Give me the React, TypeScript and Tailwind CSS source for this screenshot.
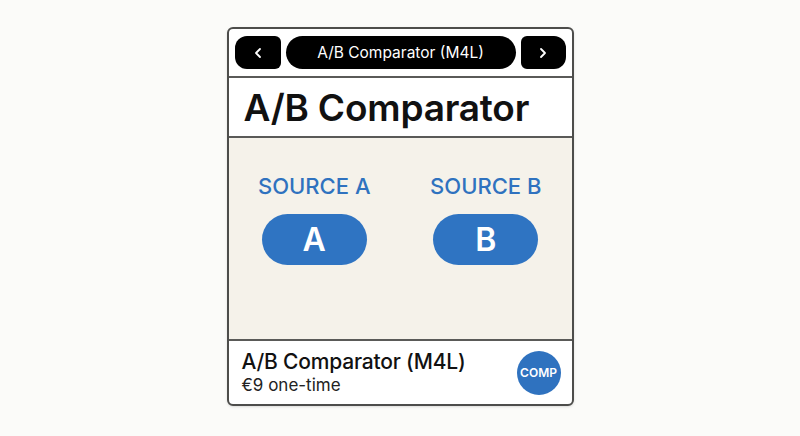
import { ChevronLeft, ChevronRight } from "lucide-react";

const App = () => {
    return (
        <div className="w-[800px] h-[436px] bg-[#fbfbf9] flex items-start justify-center pt-[27px] font-['Inter',sans-serif]">
            <div className="w-[347px] h-[379px] bg-white border-2 border-[#4d4d4b] rounded-md shadow-sm flex flex-col overflow-hidden">

                {/* Nav bar */}
                <div className="flex items-center gap-[5px] px-[6px] pt-[7px] pb-[7px]">
                    <button className="w-[46px] h-[33px] bg-black text-white rounded-l-xl rounded-r-md flex items-center justify-center">
                        <ChevronLeft className="w-4 h-4" strokeWidth={2.75} />
                    </button>
                    <div className="flex-1 h-[33px] bg-black text-white rounded-full flex items-center justify-center text-[15.5px]">
                        A/B Comparator (M4L)
                    </div>
                    <button className="w-[45px] h-[33px] bg-black text-white rounded-r-xl rounded-l-md flex items-center justify-center">
                        <ChevronRight className="w-4 h-4" strokeWidth={2.75} />
                    </button>
                </div>

                {/* Title */}
                <div className="border-t-2 border-b-2 border-[#5a5a58] h-[62px] flex items-center px-[15px]">
                    <h1 className="text-[37px] font-semibold text-[#111] tracking-[-0.2px] leading-none">A/B Comparator</h1>
                </div>

                {/* Sources */}
                <div className="flex-1 bg-[#f5f2ea] grid grid-cols-2 pt-[37px]">
                    {["A", "B"].map((s) => (
                        <div key={s} className="flex flex-col items-center">
                            <p className="text-[22px] font-medium text-[#2f72bf] leading-none">SOURCE {s}</p>
                            <button className="mt-[17px] w-[105px] h-[51px] rounded-full bg-[#2f74c2] text-white text-[32px] font-semibold flex items-center justify-center">
                                {s}
                            </button>
                        </div>
                    ))}
                </div>

                {/* Footer */}
                <div className="border-t-2 border-[#5a5a58] h-[65px] flex items-center justify-between pl-[13px] pr-[11px]">
                    <div className="flex flex-col">
                        <p className="text-[21px] font-medium text-[#111] leading-tight tracking-[-0.2px]">A/B Comparator (M4L)</p>
                        <p className="text-[17px] text-[#222] leading-tight">€9 one-time</p>
                    </div>
                    <div className="w-[44px] h-[44px] rounded-full bg-[#2f72bf] text-white text-[12px] font-semibold flex items-center justify-center">
                        COMP
                    </div>
                </div>
            </div>
        </div>
    );
};

export default App;
